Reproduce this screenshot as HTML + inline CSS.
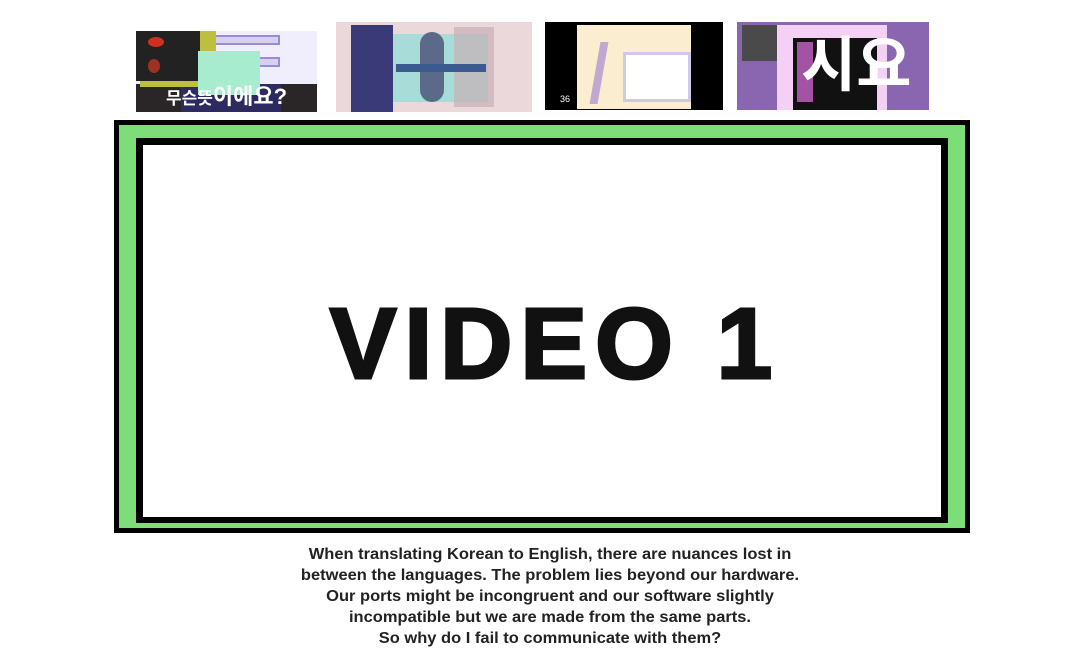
<!DOCTYPE html>
<html><head><meta charset="utf-8"><style>
*{margin:0;padding:0;box-sizing:border-box}
body{width:1081px;height:670px;background:#fff;position:relative;overflow:hidden;font-family:"Liberation Sans","Noto Sans CJK KR",sans-serif}
.a{position:absolute}
</style></head><body>
<!-- thumb 1 -->
<div class="a" style="left:136px;top:31px;width:181px;height:81px;background:#f0eefc;overflow:hidden">
 <div class="a" style="left:60px;top:4px;width:84px;height:10px;background:#d8d0f0;border:2px solid #9a8ad8"></div>
 <div class="a" style="left:60px;top:26px;width:84px;height:10px;background:#d8d0f0;border:2px solid #9a8ad8"></div>
 <div class="a" style="left:0;top:53px;width:181px;height:28px;background:#2a2628"></div>
 <div class="a" style="left:45px;top:53px;width:100px;height:28px;background:#2c2a60"></div>
 <div class="a" style="left:4px;top:0;width:76px;height:56px;background:#bcc03c"></div>
 <div class="a" style="left:0;top:0;width:64px;height:50px;background:#222"></div>
 <div class="a" style="left:12px;top:6px;width:16px;height:10px;border-radius:50%;background:#d03020"></div>
 <div class="a" style="left:12px;top:28px;width:12px;height:14px;border-radius:50%;background:#a03020"></div>
 <div class="a" style="left:62px;top:20px;width:62px;height:44px;background:#a8ecd0"></div>
 <div class="a" style="left:30px;top:48px;color:#fff;font-size:17px;font-weight:bold;white-space:nowrap">무슨뜻<span style="font-size:22px">이에요?</span></div>
</div>
<!-- thumb 2 -->
<div class="a" style="left:336px;top:22px;width:196px;height:90px;background:#ead8da;overflow:hidden">
 <div class="a" style="left:15px;top:3px;width:42px;height:87px;background:#3a3a78"></div>
 <div class="a" style="left:57px;top:12px;width:95px;height:68px;background:#a8dcd8"></div>
 <div class="a" style="left:118px;top:5px;width:40px;height:80px;background:#c8b0b8;opacity:.7"></div>
 <div class="a" style="left:84px;top:10px;width:24px;height:70px;border-radius:12px;background:#5a6a88"></div>
 <div class="a" style="left:60px;top:42px;width:90px;height:8px;background:#3a5a90"></div>
</div>
<!-- thumb 3 -->
<div class="a" style="left:545px;top:22px;width:178px;height:88px;background:#000;overflow:hidden">
 <div class="a" style="left:32px;top:3px;width:114px;height:84px;background:#fbeed0"></div>
 <div class="a" style="left:78px;top:30px;width:68px;height:50px;background:#fff;border:3px solid #d0c8e8"></div>
 <div class="a" style="left:50px;top:20px;width:8px;height:62px;background:#c0a8d0;transform:skewX(-10deg)"></div>
 <div class="a" style="left:15px;top:72px;color:#fff;font-size:9px">36</div>
</div>
<!-- thumb 4 -->
<div class="a" style="left:737px;top:22px;width:192px;height:88px;background:#8a66b0;overflow:hidden">
 <div class="a" style="left:5px;top:3px;width:48px;height:36px;background:#4a4a4a"></div>
 <div class="a" style="left:40px;top:3px;width:110px;height:85px;background:#f4d0f4"></div>
 <div class="a" style="left:56px;top:16px;width:84px;height:72px;background:#111"></div>
 <div class="a" style="left:60px;top:20px;width:16px;height:60px;background:#e070e0;opacity:.7"></div>
 <div class="a" style="left:64px;top:14px;color:#fff;font-size:60px;font-weight:bold;line-height:1">시요</div>
</div>
<!-- main box -->
<div class="a" style="left:114px;top:120px;width:856px;height:413px;background:#7ddd78;border:5px solid #000"></div>
<div class="a" style="left:136px;top:138px;width:812px;height:385px;background:#fff;border:7px solid #000;border-bottom-width:6px"></div>
<div class="a" style="left:136px;top:284px;width:838px;text-align:center;font-size:100px;font-weight:bold;color:#111;line-height:120px;letter-spacing:8px;-webkit-text-stroke:3px #111">VIDEO 1</div>
<div class="a" style="left:250px;top:544px;width:600px;text-align:center;font-size:16px;font-weight:bold;color:#222;line-height:21px;transform:scaleX(1.03)">When translating Korean to English, there are nuances lost in<br>between the languages. The problem lies beyond our hardware.<br>Our ports might be incongruent and our software slightly<br>incompatible but we are made from the same parts.<br>So why do I fail to communicate with them?</div>
</body></html>
